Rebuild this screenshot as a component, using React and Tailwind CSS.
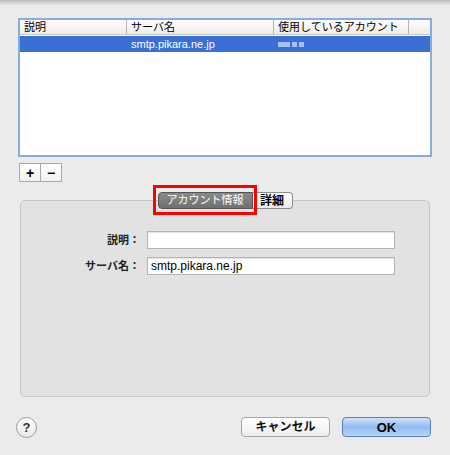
import React from "react";

const font = { fontFamily: '"Liberation Sans", "Noto Sans CJK JP", sans-serif' };

const columns = [
  { label: "説明", width: "w-[107px]" },
  { label: "サーバ名", width: "w-[147px]" },
  { label: "使用しているアカウント", width: "w-[135px]" },
];

// Account list at the top of the sheet
const ServerList = () => (
  <div className="mx-[18px] mt-[13px] h-[139px] border-2 border-[#86ade0] bg-white">
    <div className="flex h-[15px] items-center border-b border-[#c9c9c9] bg-gradient-to-b from-white to-[#ececec] text-[11px] leading-none text-black">
      {columns.map((col) => (
        <div
          key={col.label}
          className={`${col.width} flex h-full items-center whitespace-nowrap border-r border-[#b5b5b5] pl-[4px]`}
        >
          {col.label}
        </div>
      ))}
    </div>
    <div className="mt-[1px] flex h-[16px] items-center bg-[#3a70d6] text-[11px] leading-none text-white">
      <div className="w-[107px]" />
      <div className="w-[147px] pl-[4px]">smtp.pikara.ne.jp</div>
      <div className="flex gap-[2px] pl-[4px]">
        <span className="h-[5px] w-[12px] bg-[#a9c0ec] blur-[0.5px]" />
        <span className="h-[5px] w-[5px] bg-[#a9c0ec] blur-[0.5px]" />
        <span className="h-[5px] w-[5px] bg-[#a9c0ec] blur-[0.5px]" />
      </div>
    </div>
  </div>
);

const Field = ({ label, value }) => (
  <div className="flex h-[18px] items-center">
    <div className="w-[121px] pr-[2px] text-right text-[11px] font-bold leading-none text-[#222]">
      {label}
    </div>
    <div className="ml-[5px] flex h-[18px] w-[248px] items-center border border-[#b4b4b4] bg-white pl-[3px] text-[12px] leading-none text-black shadow-[inset_0_1px_1px_rgba(0,0,0,0.12)]">
      {value}
    </div>
  </div>
);

export default function App() {
  return (
    <div
      className="flex h-[455px] w-[450px] flex-col overflow-hidden bg-[#ebebeb]"
      style={font}
    >
      <div className="h-[5px] bg-gradient-to-b from-[#bdbdbd] to-[#e6e6e6]" />

      <ServerList />

      {/* add / remove */}
      <div className="ml-[19px] mt-[6px] flex h-[19px] w-[43px] border border-[#a9a9a9] bg-gradient-to-b from-white to-[#f1f1f1] text-[14px] font-bold leading-none text-black">
        <div className="flex flex-1 items-center justify-center border-r border-[#a9a9a9]">+</div>
        <div className="flex flex-1 items-center justify-center">−</div>
      </div>

      {/* tabs */}
      <div className="relative z-10 mt-[10px] flex h-[17px] justify-center">
        <div className="relative flex">
          <div className="flex h-[17px] w-[95px] items-center justify-center rounded-l-[4px] border border-[#555] bg-gradient-to-b from-[#8a8a8a] to-[#707070] text-[11px] leading-none text-white">
            アカウント情報
          </div>
          <div className="flex h-[17px] w-[40px] items-center justify-center rounded-r-[4px] border border-l-0 border-[#8e8e8e] bg-gradient-to-b from-white to-[#ececec] text-[12px] font-bold leading-none text-black">
            詳細
          </div>
          <div className="pointer-events-none absolute left-[-5px] top-[-7px] h-[30px] w-[104px] border-[3px] border-[#ff0000]" />
        </div>
      </div>

      {/* account info box */}
      <div className="mx-[20px] -mt-[9px] flex h-[197px] flex-col gap-[8px] rounded-[5px] border border-[#c6c6c6] bg-[#e2e2e2] pt-[30px]">
        <Field label="説明：" value="" />
        <Field label="サーバ名：" value="smtp.pikara.ne.jp" />
      </div>

      {/* footer */}
      <div className="mt-[20px] flex h-[20px] items-center pl-[16px] pr-[19px]">
        <div className="flex h-[21px] w-[21px] items-center justify-center rounded-full border border-[#9a9a9a] bg-gradient-to-b from-white to-[#e8e8e8] text-[13px] font-bold leading-none text-[#333]">
          ?
        </div>
        <div className="flex-1" />
        <div className="flex h-[20px] w-[89px] items-center justify-center rounded-[4px] border border-[#a5a5a5] bg-gradient-to-b from-white to-[#eeeeee] text-[12px] font-bold leading-none text-[#111]">
          キャンセル
        </div>
        <div className="ml-[12px] flex h-[20px] w-[89px] items-center justify-center rounded-[4px] border border-[#5b7fb5] bg-gradient-to-b from-[#cfe2fb] via-[#8fbaf2] to-[#b7d6fa] text-[13px] font-bold leading-none text-black">
          OK
        </div>
      </div>
    </div>
  );
}
